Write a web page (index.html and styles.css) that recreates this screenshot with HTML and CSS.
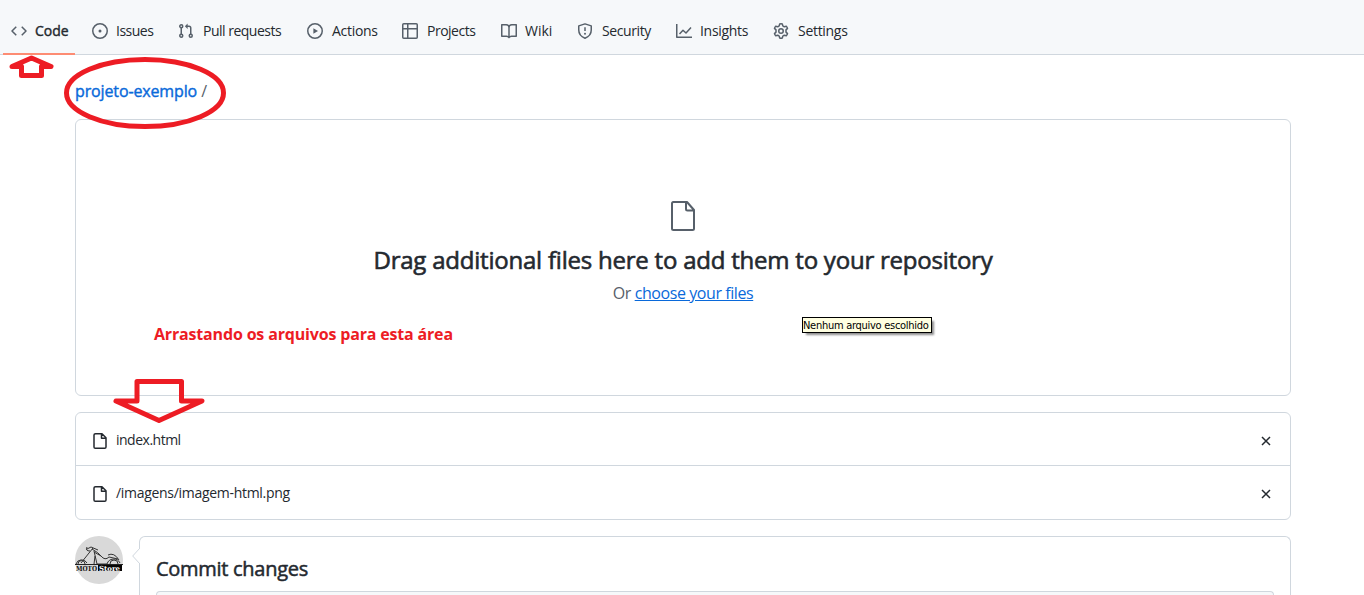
FILE: index.html
```html
<!DOCTYPE html>
<html lang="en">
<head>
<meta charset="utf-8">
<title>Upload files</title>
<link rel="stylesheet" href="styles.css">
</head>
<body>
<nav class="tabs">
  <a class="tab active"><svg class="icon" viewBox="0 0 16 16"><path d="M5.25 3.75 1 8l4.25 4.25M10.75 3.75 15 8l-4.250 4.250"/></svg><span class="t-code">Code</span></a>
  <a class="tab"><svg class="icon" viewBox="0 0 16 16"><circle cx="8" cy="8" r="7.25"/><circle class="solid" cx="8" cy="8" r="1.5"/></svg><span class="t-issues">Issues</span></a>
  <a class="tab"><svg class="icon" viewBox="0 0 16 16"><circle cx="3.250" cy="3.250" r="1.5"/><circle cx="3.250" cy="12.750" r="1.5"/><circle cx="12.750" cy="12.750" r="1.500"/><path d="M3.250 5v6M12.750 11V5q0-1.750-1.750-1.750H9"/><path class="solid" d="M9.600.500v5.500L6.900 3.250z"/></svg><span class="t-pulls">Pull requests</span></a>
  <a class="tab"><svg class="icon" viewBox="0 0 16 16"><circle cx="8" cy="8" r="7.25"/><path class="solid" d="M6.400 5.200v5.600L11 8z"/></svg><span class="t-actions">Actions</span></a>
  <a class="tab"><svg class="icon" viewBox="0 0 16 16"><rect x=".75" y=".75" width="14.500" height="14.500" rx="1"/><path d="M5.750 1v14M1 5.750h14"/></svg><span class="t-projects">Projects</span></a>
  <a class="tab"><svg class="icon" viewBox="0 0 16 16"><path d="M.75 1.750h4.500Q8 1.750 8 4.500q0-2.750 2.750-2.750h4.500v11.500h-4.700Q8.800 13.250 8 14.500q-.8-1.250-2.550-1.250H.75zM8 4v10"/></svg><span class="t-wiki">Wiki</span></a>
  <a class="tab"><svg class="icon" viewBox="0 0 16 16"><path d="M8 .9 14.250 2.900V7c0 3.800-2.400 6.700-6.250 8.200C4.150 13.700 1.750 10.800 1.750 7V2.900zM8 4.250V8"/><circle class="solid" cx="8" cy="10.700" r="1"/></svg><span class="t-security">Security</span></a>
  <a class="tab"><svg class="icon" viewBox="0 0 16 16"><path d="M.75 1v13.250H16M3.500 11 7 7.300l3 2.700 5-5.500"/></svg><span class="t-insights">Insights</span></a>
  <a class="tab"><svg class="icon" viewBox="0 0 16 16"><path d="M6.700 1Q8 .6 9.300 1l.5 1.900 1.500.9 2-.5q.9.900 1.200 2.100l-1.500 1.500v2.200l1.500 1.500q-.3 1.200-1.200 2.100l-2-.5-1.500.9-.5 1.900q-1.300.4-2.600 0l-.5-1.900-1.500-.9-2 .5q-.9-.9-1.200-2.100L3 9.100V6.900L1.500 5.400q.3-1.200 1.200-2.100l2 .5 1.500-.9z"/><circle cx="8" cy="8" r="2.250"/></svg><span class="t-settings">Settings</span></a>
</nav>

<main class="content">
  <div class="crumb"><a class="t-repo">projeto-exemplo</a> <span>/</span></div>

  <section class="drop">
    <svg class="icon drop-icon" viewBox="0 0 26 30"><path d="M3 1h14l7 8v18.500Q24 29 22.500 29H3.500q-1.500 0-1.500-1.500v-25Q2 1 3.500 1zM16 1v7q0 1.500 1.500 1.500H24"/></svg>
    <h2><span class="t-drag">Drag additional files here to add them to your repository</span></h2>
    <p><span class="t-choose">Or <a>choose your files</a></span></p>
  </section>

  <section class="files">
    <div class="file"><svg class="icon dark" viewBox="0 0 16 16"><path d="M3.500.75h6.500l4 4V14q0 1.250-1.250 1.250H3.250Q2 15.250 2 14V2Q2 .75 3.500.75zM9.500 1v4.250H14"/></svg><span class="t-file1">index.html</span><svg class="icon dark remove" viewBox="0 0 16 16"><path d="m4 4 8 8M12 4l-8 8"/></svg></div>
    <div class="file"><svg class="icon dark" viewBox="0 0 16 16"><path d="M3.500.75h6.500l4 4V14q0 1.250-1.250 1.250H3.250Q2 15.250 2 14V2Q2 .75 3.500.75zM9.500 1v4.250H14"/></svg><span class="t-file2">/imagens/imagem-html.png</span><svg class="icon dark remove" viewBox="0 0 16 16"><path d="m4 4 8 8M12 4l-8 8"/></svg></div>
  </section>

  <section class="commit-row">
    <svg class="avatar" viewBox="0 0 48 48">
      <circle cx="24" cy="24" r="24" fill="#d9d9d9"/>
      <g fill="none" stroke="#333" stroke-width="1">
        <path d="M1 28a6 6 0 0 1 11-1M3 28a3.500 3.500 0 0 1 7 0M32 28a7 7 0 0 1 13-1M35 28a4 4 0 0 1 8 0"/>
        <path d="M6 27 18 12M12 13l4-2M12 11q-2 4 3 4M16 11l7 3M17 13q7 4 9 7l-7-4M20 20l-1 8M19 15l3 13M26 20q4 5 8 1l9 2M22 28h10M33 19q6-3 11 5"/>
      </g>
      <path d="M0 28.500h48" stroke="#222"/>
      <path d="M23 29h24v6H23z" fill="#050505"/>
      <text x="1" y="34.500" textLength="21" lengthAdjust="spacingAndGlyphs" class="logo">MOTO</text>
      <text x="24" y="34.500" textLength="21" lengthAdjust="spacingAndGlyphs" class="logo light">Store</text>
    </svg>
    <div class="commit">
      <svg class="pointer" viewBox="0 0 8 16"><path d="M8 0 .7 8 8 16" fill="#fff" stroke="#d0d7de"/></svg>
      <h3><span class="t-commit">Commit changes</span></h3>
      <div class="field"></div>
    </div>
  </section>
</main>

<svg class="marks" viewBox="0 0 1364 595">
  <ellipse cx="145" cy="93" rx="78.500" ry="33.500"/>
  <path d="M31.500 58 51 66.500h-9.500V75.500h-20V66.500H12z"/>
  <path d="M137 381.500h44.500v19.500H202l-43 19.500L116 401h21z"/>
</svg>
<div class="note"><span class="t-note">Arrastando os arquivos para esta área</span></div>
<div class="tooltip"><span class="t-tip">Nenhum arquivo escolhido</span></div>
</body>
</html>
```
FILE: styles.css
```css
* { box-sizing: border-box; }
body {
  margin: 0;
  height: 595px;
  overflow: hidden;
  position: relative;
  background: #fff;
  color: #24292f;
  font: 14px/20px "Open Sans", "Noto Sans", sans-serif;
}
span { white-space: nowrap; }
h2, h3, p { margin: 0; }
.icon { flex: none; width: 16px; height: 16px; fill: none; stroke: #57606a; stroke-width: 1.5; stroke-linejoin: round; }
.icon .solid { fill: #57606a; stroke: none; }
.icon.dark { stroke: #24292f; }

.tabs {
  display: grid;
  grid-template-columns: 81px 86px 129px 95px 99px 76px 99px 97px auto;
  height: 55px;
  padding: 8px 0 0 3px;
  background: #f6f8fa;
  border-bottom: 1px solid #d0d7de;
}
.tab { display: flex; align-items: center; gap: 8px; height: 47px; padding: 0 8px 1px; }
.tab.active { width: 72px; box-shadow: inset 0 -2px #fd8c73; }

/* Medium weight: regular glyphs with a thin outline */
.t-code, .t-repo, .t-drag, .t-commit { font-weight: 400; -webkit-text-stroke: .4px currentColor; }
.t-drag { -webkit-text-stroke-width: .6px; }
.t-commit { -webkit-text-stroke-width: .5px; }

/* Per-label tracking */
.t-issues { letter-spacing: -.5px; }
.t-pulls { letter-spacing: -.5px; padding-left: 1px; }
.t-actions { letter-spacing: -.3px; padding-left: 1px; }
.t-projects { letter-spacing: -.5px; padding-left: 1px; }
.t-security { letter-spacing: -.4px; padding-left: 1px; }
.t-insights { letter-spacing: -.3px; }
.t-settings { letter-spacing: -.3px; padding-left: 1px; }
.t-repo { letter-spacing: -.13px; }
.t-drag { letter-spacing: -.22px; }
.t-choose { letter-spacing: -.42px; }
.t-file1 { letter-spacing: -.5px; }
.t-file2 { letter-spacing: -.3px; }
.t-commit { letter-spacing: -.28px; }
.t-note { letter-spacing: -.17px; }
.t-tip { letter-spacing: -.28px; }

.content { width: 1216px; height: 540px; overflow: hidden; margin-left: 75px; }
.crumb { height: 64px; padding-top: 24px; font-size: 16px; line-height: 24px; color: #57606a; white-space: nowrap; }
.crumb a { color: #0969da; }

.drop, .files, .commit { border: 1px solid #d0d7de; border-radius: 6px; }
.drop { height: 277px; display: flex; flex-direction: column; align-items: center; padding-top: 81px; }
.drop-icon { width: 26px; height: 30px; stroke-width: 2; }
.drop h2 { margin-top: 11px; font-size: 24px; line-height: 36px; }
.drop p { margin-top: 3px; font-size: 16px; line-height: 24px; color: #57606a; }
.drop p a { color: #0969da; text-decoration: underline; }

.files { margin-top: 16px; height: 108px; }
.file { height: 52px; display: flex; align-items: center; gap: 8px; padding: 4px 16px 0; }
.file span { position: relative; top: -1px; }
.file + .file { height: 53px; border-top: 1px solid #d0d7de; }
.remove { margin-left: auto; }

.commit-row { display: flex; gap: 16px; margin-top: 16px; }
.avatar { width: 48px; height: 48px; flex: none; }
.logo { font: bold 7px "DejaVu Serif", serif; fill: #111; }
.logo.light { fill: #fff; }
.commit { position: relative; flex: 1; height: 59px; padding: 17px 16px 0; border-bottom: 0; border-radius: 6px 6px 0 0; }
.pointer { position: absolute; left: -8px; top: 11px; width: 8px; height: 16px; }
.commit h3 { height: 37px; font-size: 20px; line-height: 30px; }
.field { height: 4px; border: 1px solid #d0d7de; border-bottom: 0; border-radius: 6px 6px 0 0; background: #f6f8fa; }

.marks { position: absolute; inset: 0; width: 1364px; height: 595px; fill: none; stroke: #ed1c24; stroke-width: 5; stroke-linejoin: round; pointer-events: none; }
.note { position: absolute; left: 154px; top: 324px; color: #ed1c24; font-weight: 700; font-size: 16px; }
.tooltip {
  position: absolute; left: 802px; top: 317px; width: 130px; height: 16px;
  border: 1px solid #000; background: #ffffe1; color: #000;
  box-shadow: 3px 3px 2px -1px rgba(0, 0, 0, .45);
  font: 11px/15px "DejaVu Sans Condensed", "DejaVu Sans", sans-serif;
}
```
